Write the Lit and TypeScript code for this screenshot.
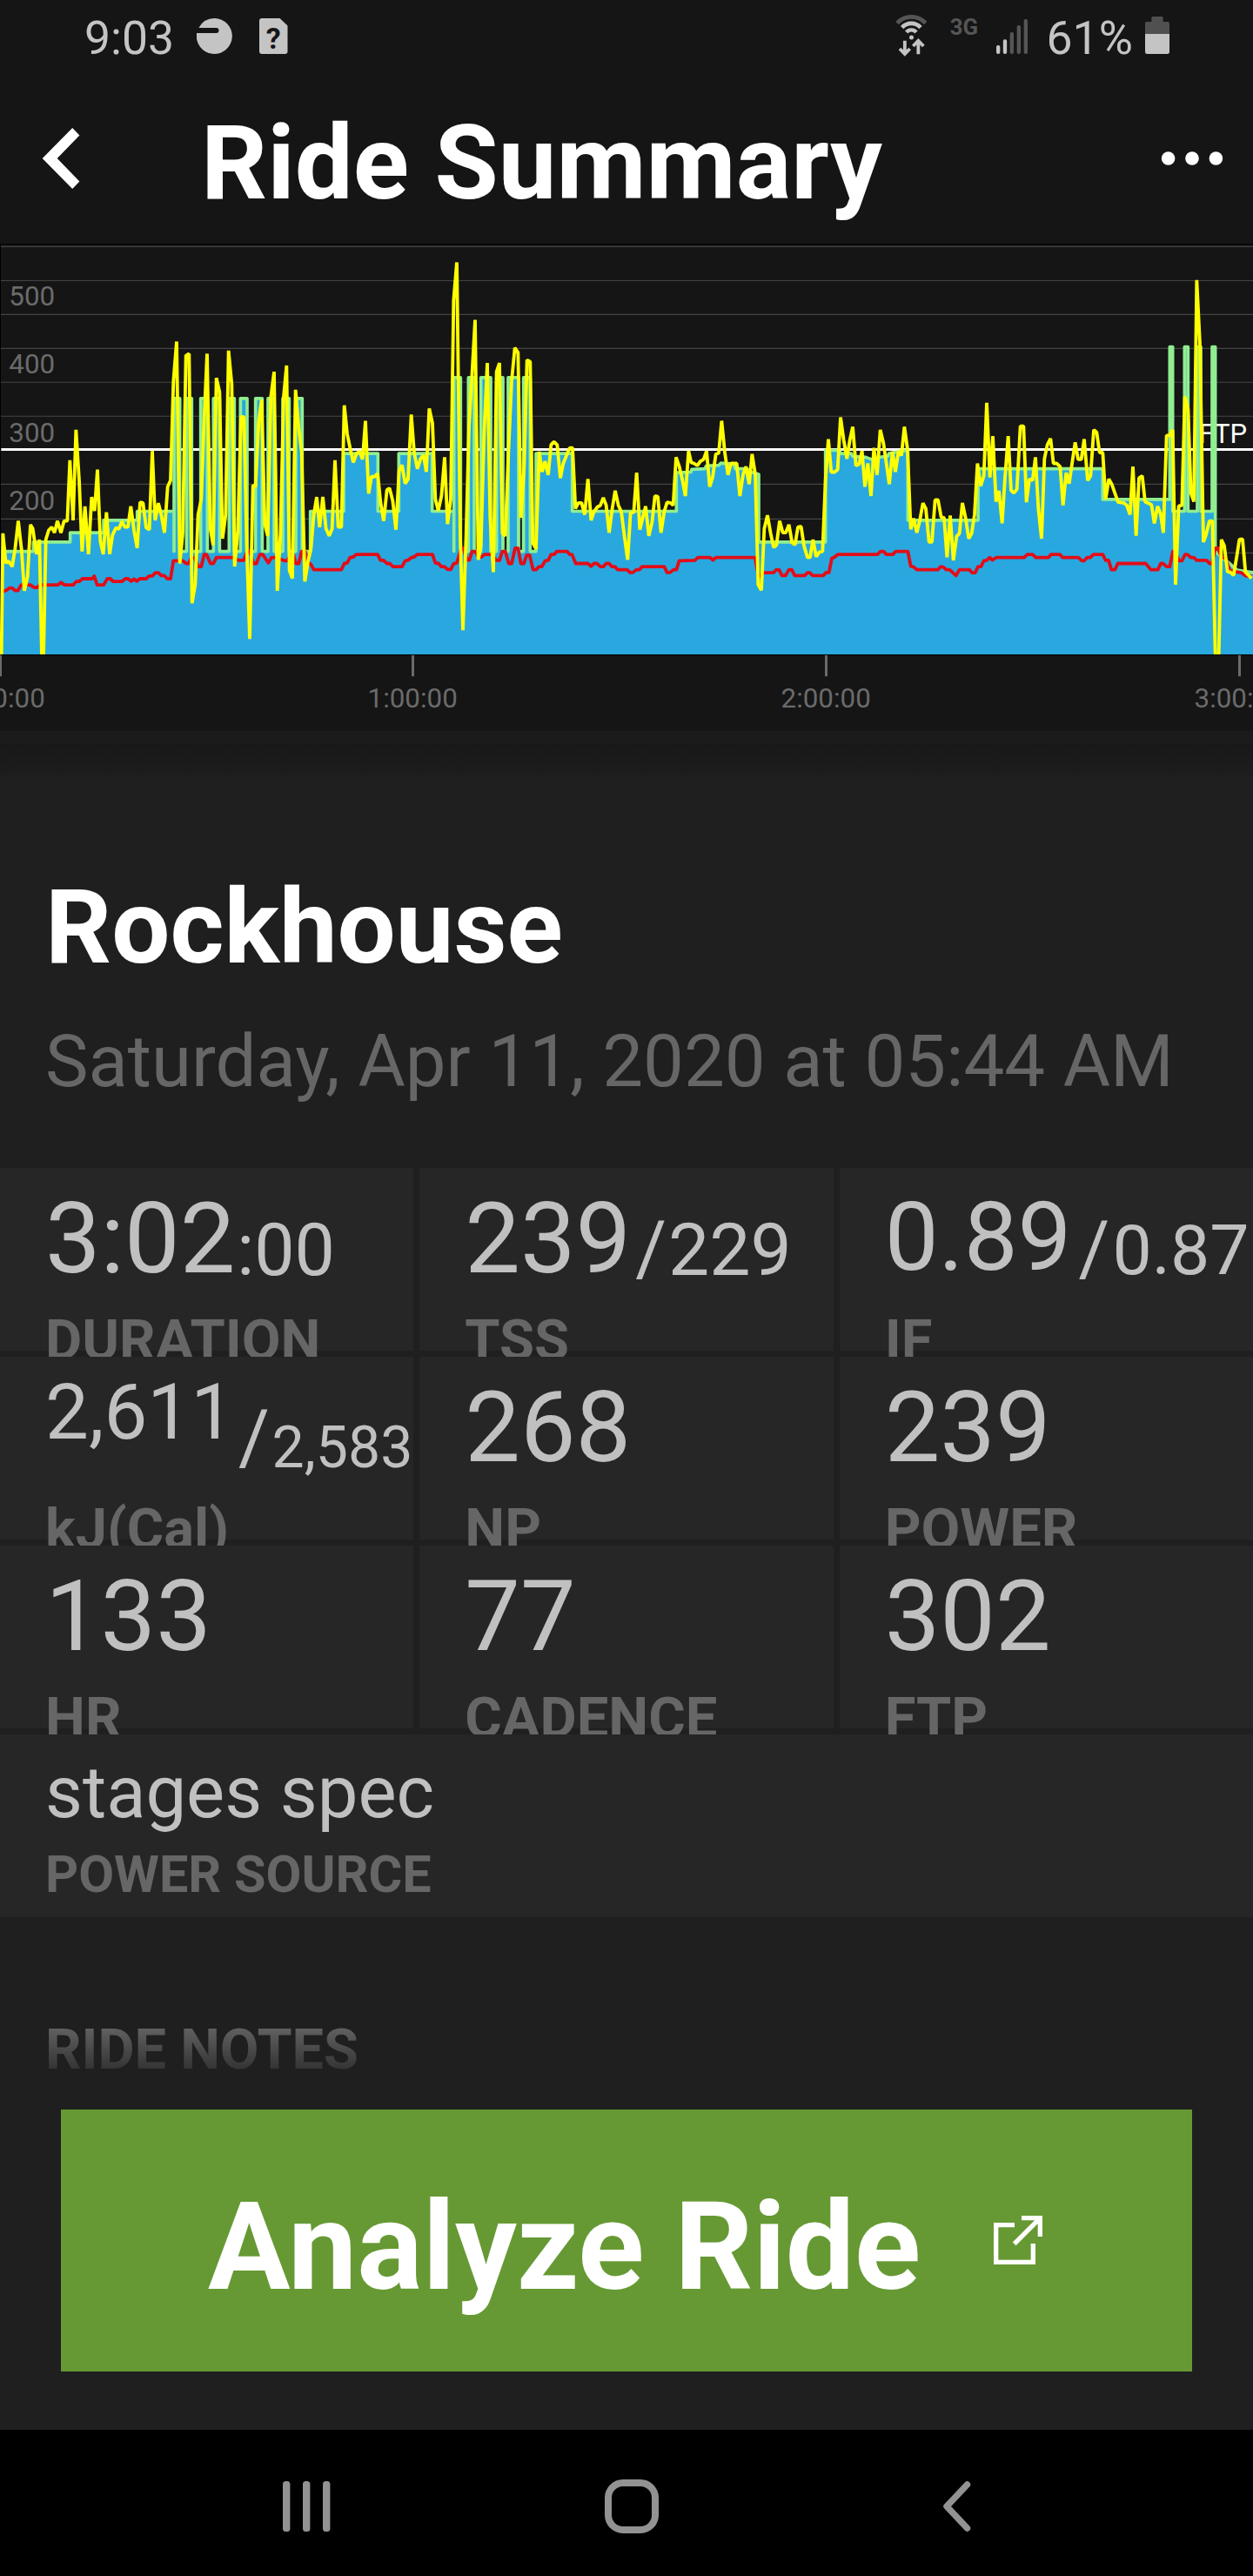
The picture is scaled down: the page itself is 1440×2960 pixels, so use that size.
import { LitElement, html, css, svg } from "lit";
import { customElement, property } from "lit/decorators.js";
import { classMap } from "lit/directives/class-map.js";

/* Series samples: x in thirds of a pixel, y in 2.8ths of a pixel.
   Y() brings y to the same unit as x, so strokes and text stay undistorted. */
type Segment = [offset: number, points: string];

const Y = (y: number): number => Math.round(y * (3 / 2.8) * 10) / 10;

const toPoints = (segments: Segment[]): string =>
  segments
    .map(([offset, points]) =>
      points
        .trim()
        .split(/\s+/)
        .map((p) => {
          const [x, y] = p.split(",").map(Number);
          return `${x + offset},${Y(y)}`;
        })
        .join(" "),
    )
    .join(" ");

const bars = (list: [number, number][], top: number, base: number): string =>
  list.map(([a, b]) => `${a},${base} ${a},${top} ${b},${top} ${b},${base}`).join(" ");

const TARGET = toPoints([
  [0, "5,1018 115,1018 115,988 242,988 242,958 357,958 357,918 473,918 473,889 600,889"],
  [0, bars([[600, 620], [643, 661], [692, 715], [736, 757], [790, 808], [829, 852], [881, 904], [924, 945], [975, 997], [1020, 1042]], 526, 1018)],
  [0, "1070,1018 1070,889"],
  [1080, "105,889 105,703 223,703 223,889 295,889 295,703 410,703 410,889 485,889"],
  [1080, bars([[485, 508], [535, 555], [578, 612], [632, 654], [672, 708], [725, 748]], 459, 1018)],
  [1080, "768,1018 768,703 893,703 893,889"],
  [2160, "172,889 172,765 222,763 225,754 270,752 275,743 318,741 325,734 370,737 375,752 415,752 430,763 456,770 456,988 686,988 686,693 735,693 737,703 775,703 780,712 825,715 845,722 865,720 870,715 900,712 905,703 950,695 970,693 970,918"],
  [3240, "132,918 132,752 562,752 562,851 793,851 793,360 803,360 803,889 844,889 844,360 856,360 856,889 888,889 888,360 900,360 900,889 939,889 939,360 950,360 950,1018 990,1050 1025,1078 1080,1086"],
]);

const HEART = toPoints([
  [0, "10,1147 22,1143 32,1136 42,1136 52,1144 62,1144 73,1126 105,1126 117,1134 128,1134 138,1126 200,1126 210,1118 222,1126 252,1126 263,1115 273,1115 284,1106 317,1106 325,1098 335,1126 357,1126 370,1106 380,1106 390,1115 420,1115 432,1106 442,1106 452,1114 462,1107 472,1114 482,1106 504,1106 514,1097 525,1097 536,1087 546,1087 556,1096 566,1096 577,1106 588,1106 598,1048 630,1048 642,1057 650,1057 660,1038 672,1040 684,1067 694,1067 704,1028 712,1028 726,1057 736,1057 746,1038 805,1038 825,1047 840,1047 852,1018 862,1018 873,1057 884,1057 896,1028 906,1028 925,1055 936,1038 955,1038 980,1048 990,1048 1002,1028 1012,1030 1020,1057 1030,1057 1040,1018 1052,1018 1060,1050 1072,1060 1082,1077"],
  [1080, "97,1077 107,1057 117,1055 127,1038 138,1036 148,1028 222,1028 232,1047 243,1047 254,1057 264,1057 275,1067 306,1067 317,1048 328,1046 338,1038 348,1036 358,1028 411,1028 421,1055 432,1057 442,1067 452,1067 463,1076 474,1076 484,1058 495,1055 510,1008 517,1008 530,1045 538,1046 548,1018 558,1018 570,1035 580,1036 590,1028 615,1028 632,1047 642,1047 652,1018 662,1018 674,1057 684,1057 696,1008 706,1008 716,1057 726,1057 736,1030 746,1030 758,1077 768,1077 778,1067 788,1067 800,1048 810,1047 820,1028 830,1028 840,1018 875,1018 884,1028 892,1028 905,1057 947,1057 958,1066 968,1057 978,1057 990,1067 1000,1067 1010,1057 1020,1057 1030,1067 1040,1067 1050,1077 1075,1077"],
  [2160, "2,1077 12,1086 22,1086 34,1077 44,1077 54,1067 130,1067 140,1086 150,1086 162,1077 172,1077 182,1048 236,1047 246,1038 288,1038 298,1046 308,1038 443,1038 455,1097 462,1097 472,1087 508,1086 516,1077 526,1077 536,1096 548,1096 560,1077 570,1077 580,1096 614,1096 624,1087 632,1087 642,1096 678,1096 688,1086 698,1086 708,1040 718,1036 728,1028 865,1028 876,1018 886,1018 896,1028 918,1028 928,1018 970,1018 980,1066 990,1068 1002,1077 1074,1077"],
  [3240, "2,1068 12,1068 22,1077 34,1077 56,1096 68,1077 102,1077 112,1087 122,1087 132,1067 142,1067 152,1048 162,1047 172,1038 182,1046 194,1038 290,1038 302,1028 320,1028 332,1038 374,1038 384,1028 414,1028 424,1038 478,1038 490,1048 498,1048 508,1038 518,1038 530,1028 562,1028 572,1047 582,1047 592,1077 604,1077 614,1057 710,1057 728,1077 752,1077 762,1057 770,1057 782,1067 793,1067 804,1018 812,1020 825,1048 835,1048 846,1028 854,1028 866,1038 876,1038 886,1047 920,1047 930,1057 938,1057 950,1008 960,1008 970,1035 985,1040 1000,1080 1040,1087 1055,1097 1075,1097"],
]);

const POWER = toPoints([
  [0, "5,1350 10,960 20,1055 30,1050 42,1067 52,1010 63,920 74,1010 84,1145 95,1100 105,932 113,945 126,1027 136,980 147,1500 158,980 168,950 178,940 188,958 198,920 210,958 221,920 232,920 241,725 252,918 262,627 273,790 283,1018 293,873 305,1027 316,843 326,888 336,755 346,985 356,1027 367,892 378,1027 388,965 400,942 410,946 420,922 431,940 441,940 451,873 462,950 473,1007 483,860 493,862 504,942 515,948 525,695 535,918 546,863 556,900 567,958 578,810 588,790 598,470 609,343 620,1057 630,960 641,388 652,382 662,1185 673,1125 683,900 694,850 704,590 714,382 725,945 735,998 746,460 757,505 767,977 778,900 788,372 799,480 809,1067 820,950 831,585 841,585 851,1010 861,1300 872,805 881,810 892,600 902,530 913,930 923,968 934,520 945,440 956,1145 967,960 978,520 988,420 998,1080 1008,1105 1019,498 1030,620 1040,700 1051,1115 1062,1050 1072,1010 1082,900"],
  [1080, "12,843 22,940 33,843 44,945 55,968 65,945 75,725 86,940 97,940 107,548 117,640 128,690 138,732 150,702 160,697 170,722 180,598 191,832 201,777 211,778 222,767 232,860 243,920 254,820 263,815 274,855 285,948 296,760 306,740 317,800 327,785 338,578 348,700 359,752 370,720 380,708 390,762 400,558 411,605 421,850 431,887 442,840 453,715 463,930 474,850 484,210 495,88 507,970 516,1272 527,970 537,620 548,440 558,273 569,1045 578,1000 589,640 600,412 610,910 621,1085 632,440 642,412 652,960 662,968 673,700 684,470 695,363 706,378 716,910 727,750 737,402 748,408 757,990 768,1010 779,697 789,762 799,728 810,772 820,675 830,665 841,675 852,782 862,735 875,705 884,685 894,685 904,880 914,862 925,862 936,900 947,785 958,918 968,890 980,875 990,870 1000,845 1010,870 1020,958 1031,880 1041,823 1052,870 1062,890 1073,970"],
  [2160, "4,1045 14,893 25,893 35,765 46,948 56,910 66,873 77,968 88,925 98,840 108,842 119,958 130,890 140,860 152,862 161,870 171,715 182,745 192,785 203,840 214,695 223,732 233,735 244,742 255,728 266,722 276,695 287,810 297,780 308,705 318,702 328,598 339,700 350,772 360,735 380,735 391,840 402,770 412,745 423,802 433,705 444,770 454,1125 465,1143 475,945 486,902 497,960 507,1005 517,998 528,920 539,958 549,958 560,932 571,990 581,997 591,940 602,938 612,1000 624,1038 633,1037 643,980 654,1035 665,1020 676,1018 686,790 696,657 706,763 717,763 728,755 738,587 749,660 760,720 770,660 780,617 791,742 802,738 812,695 822,810 832,735 843,840 853,685 864,772 875,627 886,670 896,735 906,802 917,697 927,762 938,695 948,710 958,617 969,690 980,947 990,912 1001,958 1011,920 1022,863 1032,880 1043,988 1053,988 1064,852 1074,852"],
  [3240, "5,908 15,910 25,1037 36,903 47,1047 58,970 68,960 78,862 89,910 100,977 110,960 120,900 130,735 141,808 152,775 162,540 173,780 183,647 194,858 204,823 215,928 225,780 236,647 246,822 256,830 266,818 278,615 289,615 299,860 309,785 320,790 330,715 340,880 351,977 361,720 371,675 382,655 392,735 403,735 415,745 425,870 436,765 446,800 457,730 467,667 477,722 488,722 498,657 510,790 520,775 531,627 541,635 551,700 562,700 572,850 583,785 593,802 615,860 635,862 645,870 656,900 666,745 677,968 687,782 698,775 708,858 730,868 740,928 751,873 761,895 771,958 782,645 793,645 803,627 813,1125 824,872 835,870 845,520 856,560 866,830 876,858 886,145 897,350 909,988 918,965 930,920 940,920 950,1350 962,1350 971,980 981,1000 992,1083 1002,1085 1013,1095 1023,1040 1033,980 1044,978 1054,1085 1065,1095 1075,1105"],
]);

const GRID_LINES = [37.5, 147, 256, 365, 474, 583, 802, 914, 1023];
const Y_LABELS: [string, number][] = [["500", 227], ["400", 445], ["300", 666], ["200", 885]];
const X_LABELS: [string, number][] = [["0:00:00", 1.5], ["1:00:00", 1423.5], ["2:00:00", 2848.5], ["3:00:00", 4273.5]];
const BASE = Y(1350);

@customElement("power-chart")
export class PowerChart extends LitElement {
  static styles = css`
    :host { display: block; height: 560px; background: #151515; }
    .plot { display: block; width: 1440px; height: 560px; overflow: visible; font-family: Roboto, "Liberation Sans", sans-serif; }
    .grid { stroke: #444; stroke-width: 3.4; }
    .frame { stroke: #000; stroke-width: 3; }
    .ftp { stroke: #fff; stroke-width: 9; }
    .ftp-label { fill: #fff; font-size: 93px; }
    .scale { fill: #6b6b6b; font-size: 94px; }
    .tick { stroke: #6b6b6b; stroke-width: 9; }
    .area { fill: #29a8e0; }
    .line { fill: none; stroke-width: 11; stroke-linejoin: round; }
    .target { stroke: #90ee90; }
    .heart { stroke: #e20d18; stroke-width: 11.5; }
    .power { stroke: #ffff00; stroke-width: 11.5; stroke-linejoin: bevel; }
  `;

  render() {
    return html`
      <svg class="plot" viewBox="0 30 4320 1680">
        <clipPath id="plot-area"><rect x="0" y="30" width="4320" height=${BASE - 30}></rect></clipPath>
        ${GRID_LINES.map((y) => svg`<line class="grid" x1="0" x2="4320" y1=${Y(y)} y2=${Y(y)}></line>`)}
        <line class="frame" x1="0" x2="4320" y1="31.5" y2="31.5"></line>
        <line class="frame" x1="1.5" x2="1.5" y1="30" y2=${BASE}></line>
        ${Y_LABELS.map(([t, y]) => svg`<text class="scale" x="31" y=${Y(y)}>${t}</text>`)}
        <line class="ftp" x1="4" x2="4320" y1=${Y(690)} y2=${Y(690)}></line>
        <text class="ftp-label" x="4133" y=${Y(669)}>FTP</text>
        <g clip-path="url(#plot-area)">
          <polygon class="area" points="5,${BASE} ${TARGET} 4320,${BASE}"></polygon>
          <polyline class="line target" points=${TARGET}></polyline>
          <polyline class="line heart" points=${HEART}></polyline>
          <polyline class="line power" points=${POWER}></polyline>
        </g>
        <line class="frame" x1="0" x2="4320" y1=${BASE + 1} y2=${BASE + 1}></line>
        ${X_LABELS.map(
          ([t, x]) => svg`
            <line class="tick" x1=${x} x2=${x} y1=${Y(1352)} y2=${Y(1420)}></line>
            <text class="scale" text-anchor="middle" x=${x - 1} y=${Y(1519)}>${t}</text>`,
        )}
      </svg>
    `;
  }
}

interface Part { text: string; kind: string; }
interface Metric { parts: Part[]; label: string; }

const METRICS: Metric[] = [
  { label: "DURATION", parts: [{ text: "3:02", kind: "main" }, { text: ":00", kind: "seconds" }] },
  { label: "TSS", parts: [{ text: "239", kind: "main" }, { text: "/", kind: "slash" }, { text: "229", kind: "sub" }] },
  { label: "IF", parts: [{ text: "0.89", kind: "decimal" }, { text: "/", kind: "slash far" }, { text: "0.87", kind: "sub-decimal" }] },
  { label: "kJ(Cal)", parts: [{ text: "2,611", kind: "work" }, { text: "/", kind: "slash" }, { text: "2,583", kind: "sub-work" }] },
  { label: "NP", parts: [{ text: "268", kind: "main" }] },
  { label: "POWER", parts: [{ text: "239", kind: "main" }] },
  { label: "HR", parts: [{ text: "133", kind: "main" }] },
  { label: "CADENCE", parts: [{ text: "77", kind: "main" }] },
  { label: "FTP", parts: [{ text: "302", kind: "main" }] },
];

@customElement("metric-cell")
export class MetricCell extends LitElement {
  @property({ attribute: false }) metric!: Metric;

  static styles = css`
    :host { display: block; height: 210px; background: #262626; padding-left: 52px; box-sizing: border-box; line-height: 1; }
    .value { display: flex; align-items: flex-start; height: 165px; color: #c0c0c0; white-space: nowrap; }
    .value span { line-height: 1; }
    .value .main { font-size: 113.2px; padding-top: 25px; }
    .value .seconds { font-size: 82.5px; padding: 54px 0 0 2px; }
    .value .slash { font-size: 87px; padding: 50px 0 0 5px; }
    .value .far { padding-left: 8px; }
    .value .sub { font-size: 84px; padding: 52.5px 0 0 2px; }
    .value .decimal { font-size: 110.2px; padding-top: 25px; }
    .value .sub-decimal { font-size: 80.6px; padding: 55.4px 0 0 3px; }
    .value .work { font-size: 88.8px; padding-top: 20px; }
    .value .sub-work { font-size: 66.2px; padding: 71.8px 0 0 2.6px; }
    .label { color: #666; font-weight: 700; font-size: 65px; line-height: 65px; padding-top: 1px; white-space: nowrap; }
  `;

  render() {
    return html`
      <div class="value">
        ${this.metric.parts.map(
          (p) => html`<span class=${classMap(Object.fromEntries(p.kind.split(" ").map((k) => [k, true])))}>${p.text}</span>`,
        )}
      </div>
      <div class="label">${this.metric.label}</div>
    `;
  }
}

@customElement("app-root")
export class AppRoot extends LitElement {
  static styles = css`
    :host { display: block; width: 1440px; height: 2960px; overflow: hidden; background: #1f1f1f; color: #fff;
      font-family: Roboto, "Liberation Sans", sans-serif; line-height: 1; }
    svg { display: block; flex: none; }

    .status { display: flex; align-items: flex-start; height: 90px; background: #151515; color: #c4c4c4;
      padding: 0 96px 0 97px; box-sizing: border-box; white-space: nowrap; }
    .clock, .percent { font-size: 53.5px; line-height: 53.5px; padding-top: 16.5px; }
    .clock { width: 129px; }
    .notice { margin-top: 21px; }
    .sim { margin: 21px auto 0 30.5px; overflow: visible; }
    .sim-mark { fill: #151515; font: 700 34px Roboto, sans-serif; }
    .wifi { margin-top: 16px; }
    .network { color: #555; font-weight: 700; font-size: 25.8px; line-height: 26px; width: 53.3px; padding: 18px 0 0 24.7px; box-sizing: content-box; }
    .signal { margin-top: 21px; }
    .percent { width: 113.5px; padding-left: 21.5px; }
    .battery { margin-top: 19px; }

    .header { display: flex; align-items: flex-start; height: 190px; background: #151515; padding: 0 34px 0 48px; box-sizing: border-box; }
    .back { margin-top: 57px; }
    .title { margin: 0 auto 0 139px; font-size: 119px; line-height: 119px; font-weight: 700; padding-top: 38px; white-space: nowrap; }
    .more { margin-top: 84px; }

    .band { height: 14px; background: #1b1b1b; }
    .shade { height: 37px; background: linear-gradient(#181818, #1d1d1d); }

    .intro { height: 451px; padding: 115px 0 0 52px; box-sizing: border-box; white-space: nowrap; }
    .name { margin: 0; font-size: 119px; line-height: 119px; font-weight: 700; }
    .date { margin: 53px 0 0; font-size: 83.35px; line-height: 83px; color: #666; }

    .metrics { display: grid; grid-template-columns: repeat(3, minmax(0, 1fr)); grid-auto-rows: 210px; gap: 7px; height: 651px; }

    .source { position: relative; height: 210px; background: #262626; padding: 25px 0 0 52px; box-sizing: border-box; }
    .source-name { font-size: 83.2px; line-height: 84px; color: #c0c0c0; }
    .source-label { margin-top: 22px; font-size: 59.3px; line-height: 60px; font-weight: 700; color: #666; }

    .notes { height: 221px; padding: 119.5px 0 0 52px; box-sizing: border-box; color: #666; font-size: 64.8px; line-height: 65px; font-weight: 700;
      mask-image: linear-gradient(#000 122px, transparent 197px); }

    .analyze { display: flex; align-items: flex-start; margin: 0 70px; height: 301px; background: #669933; padding-left: 169px; box-sizing: border-box; }
    .analyze-label { font-size: 140.8px; line-height: 141px; font-weight: 700; padding-top: 87px; white-space: nowrap; }
    .external { margin: 122px 0 0 84px; }

    .nav { display: flex; align-items: center; height: 168px; margin-top: 67px; background: #000; padding: 8px 0 0 325px; box-sizing: border-box; }
    .home { margin-left: 315px; }
    .nav-back { margin-left: 323px; }
  `;

  private renderStatus() {
    return html`
      <div class="status">
        <span class="clock">9:03</span>
        <svg class="notice" width="41" height="41" viewBox="0 0 41 41">
          <path fill="#c4c4c4" d="M20.5 0A20.5 20.5 0 1 1 .1 17H22.5A3 3 0 0 0 22.5 11H2.4A20.5 20.5 0 0 1 20.5 0Z"></path>
        </svg>
        <svg class="sim" width="33" height="41" viewBox="0 0 33 41">
          <path fill="#c4c4c4" d="M3 0H23.5L32.5 8.5V38A3 3 0 0 1 29.5 41H3A3 3 0 0 1 0 38V3A3 3 0 0 1 3 0Z"></path>
          <text class="sim-mark" x="16.3" y="35" text-anchor="middle">?</text>
        </svg>
        <svg class="wifi" width="38" height="49" viewBox="27 48 114 147" fill="none">
          <path stroke="#555" stroke-width="14" d="M33 80A66 66 0 0 1 131 80"></path>
          <path stroke="#c4c4c4" stroke-width="14" d="M50 95A43 43 0 0 1 114 95"></path>
          <path stroke="#c4c4c4" stroke-width="13" d="M65 111A22 22 0 0 1 99 111"></path>
          <circle cx="82.5" cy="129" r="7.5" fill="#c4c4c4"></circle>
          <path stroke="#c4c4c4" stroke-width="11.5" d="M59.5 140V184M42 168L59.5 186L77 168M106 187V144M88 159L106 140L124 159"></path>
        </svg>
        <span class="network">3G</span>
        <svg class="signal" width="36" height="41" viewBox="0 0 108 123">
          <rect x="0" y="93" width="13" height="30" rx="6" fill="#c4c4c4"></rect>
          <rect x="23.5" y="73" width="13" height="50" rx="6" fill="#c4c4c4"></rect>
          <rect x="47" y="48" width="13" height="75" rx="6" fill="#555"></rect>
          <rect x="71" y="24" width="13" height="99" rx="6" fill="#555"></rect>
          <rect x="95" y="3" width="13" height="120" rx="6" fill="#555"></rect>
        </svg>
        <span class="percent">61%</span>
        <svg class="battery" width="28" height="43" viewBox="0 0 84 129">
          <path fill="#505050" d="M22 18V5Q22 0 27 0H57Q62 0 62 5V18H78Q84 18 84 24V60H0V24Q0 18 6 18Z"></path>
          <path fill="#c4c4c4" d="M0 60H84V122Q84 129 77 129H7Q0 129 0 122Z"></path>
        </svg>
      </div>
    `;
  }

  private renderHeader() {
    return html`
      <div class="header">
        <svg class="back" width="44" height="70" viewBox="0 0 44 70">
          <path fill="#fff" d="M35.2 0L43.4 8.5L17.7 35L43.4 61.5L35.2 70L.7 35Z"></path>
        </svg>
        <h1 class="title">Ride Summary</h1>
        <svg class="more" width="72" height="16" viewBox="0 0 72 16" fill="#fff">
          <circle cx="8.6" cy="8" r="7.8"></circle>
          <circle cx="36" cy="8" r="7.8"></circle>
          <circle cx="63.4" cy="8" r="7.8"></circle>
        </svg>
      </div>
    `;
  }

  render() {
    return html`
      ${this.renderStatus()} ${this.renderHeader()}
      <power-chart></power-chart>
      <div class="band"></div>
      <div class="shade"></div>
      <div class="intro">
        <h2 class="name">Rockhouse</h2>
        <p class="date">Saturday, Apr 11, 2020 at 05:44 AM</p>
      </div>
      <div class="metrics">${METRICS.map((m) => html`<metric-cell .metric=${m}></metric-cell>`)}</div>
      <div class="source">
        <div class="source-name">stages spec</div>
        <div class="source-label">POWER SOURCE</div>
      </div>
      <div class="notes">RIDE NOTES</div>
      <div class="analyze">
        <span class="analyze-label">Analyze Ride</span>
        <svg class="external" width="56" height="56" viewBox="96 78 168 168" fill="none" stroke="#fff" stroke-width="16">
          <path d="M168 110H104V238H232V174M192 86H256V150M167 175L254 88"></path>
        </svg>
      </div>
      <div class="nav">
        <svg width="55" height="58" viewBox="0 0 55 58" fill="#929292">
          <rect x="0" y="0" width="8.4" height="58" rx="3.5"></rect>
          <rect x="23" y="0" width="8.4" height="58" rx="3.5"></rect>
          <rect x="46" y="0" width="8.4" height="58" rx="3.5"></rect>
        </svg>
        <svg class="home" width="62" height="62" viewBox="0 0 62 62" fill="none">
          <rect x="4" y="4" width="54" height="54" rx="17" stroke="#929292" stroke-width="8"></rect>
        </svg>
        <svg class="nav-back" width="38" height="62" viewBox="0 0 38 62" fill="none">
          <path stroke="#929292" stroke-width="7.5" stroke-linecap="round" stroke-linejoin="round" d="M31.5 6L8 31L31.5 56"></path>
        </svg>
      </div>
    `;
  }
}
